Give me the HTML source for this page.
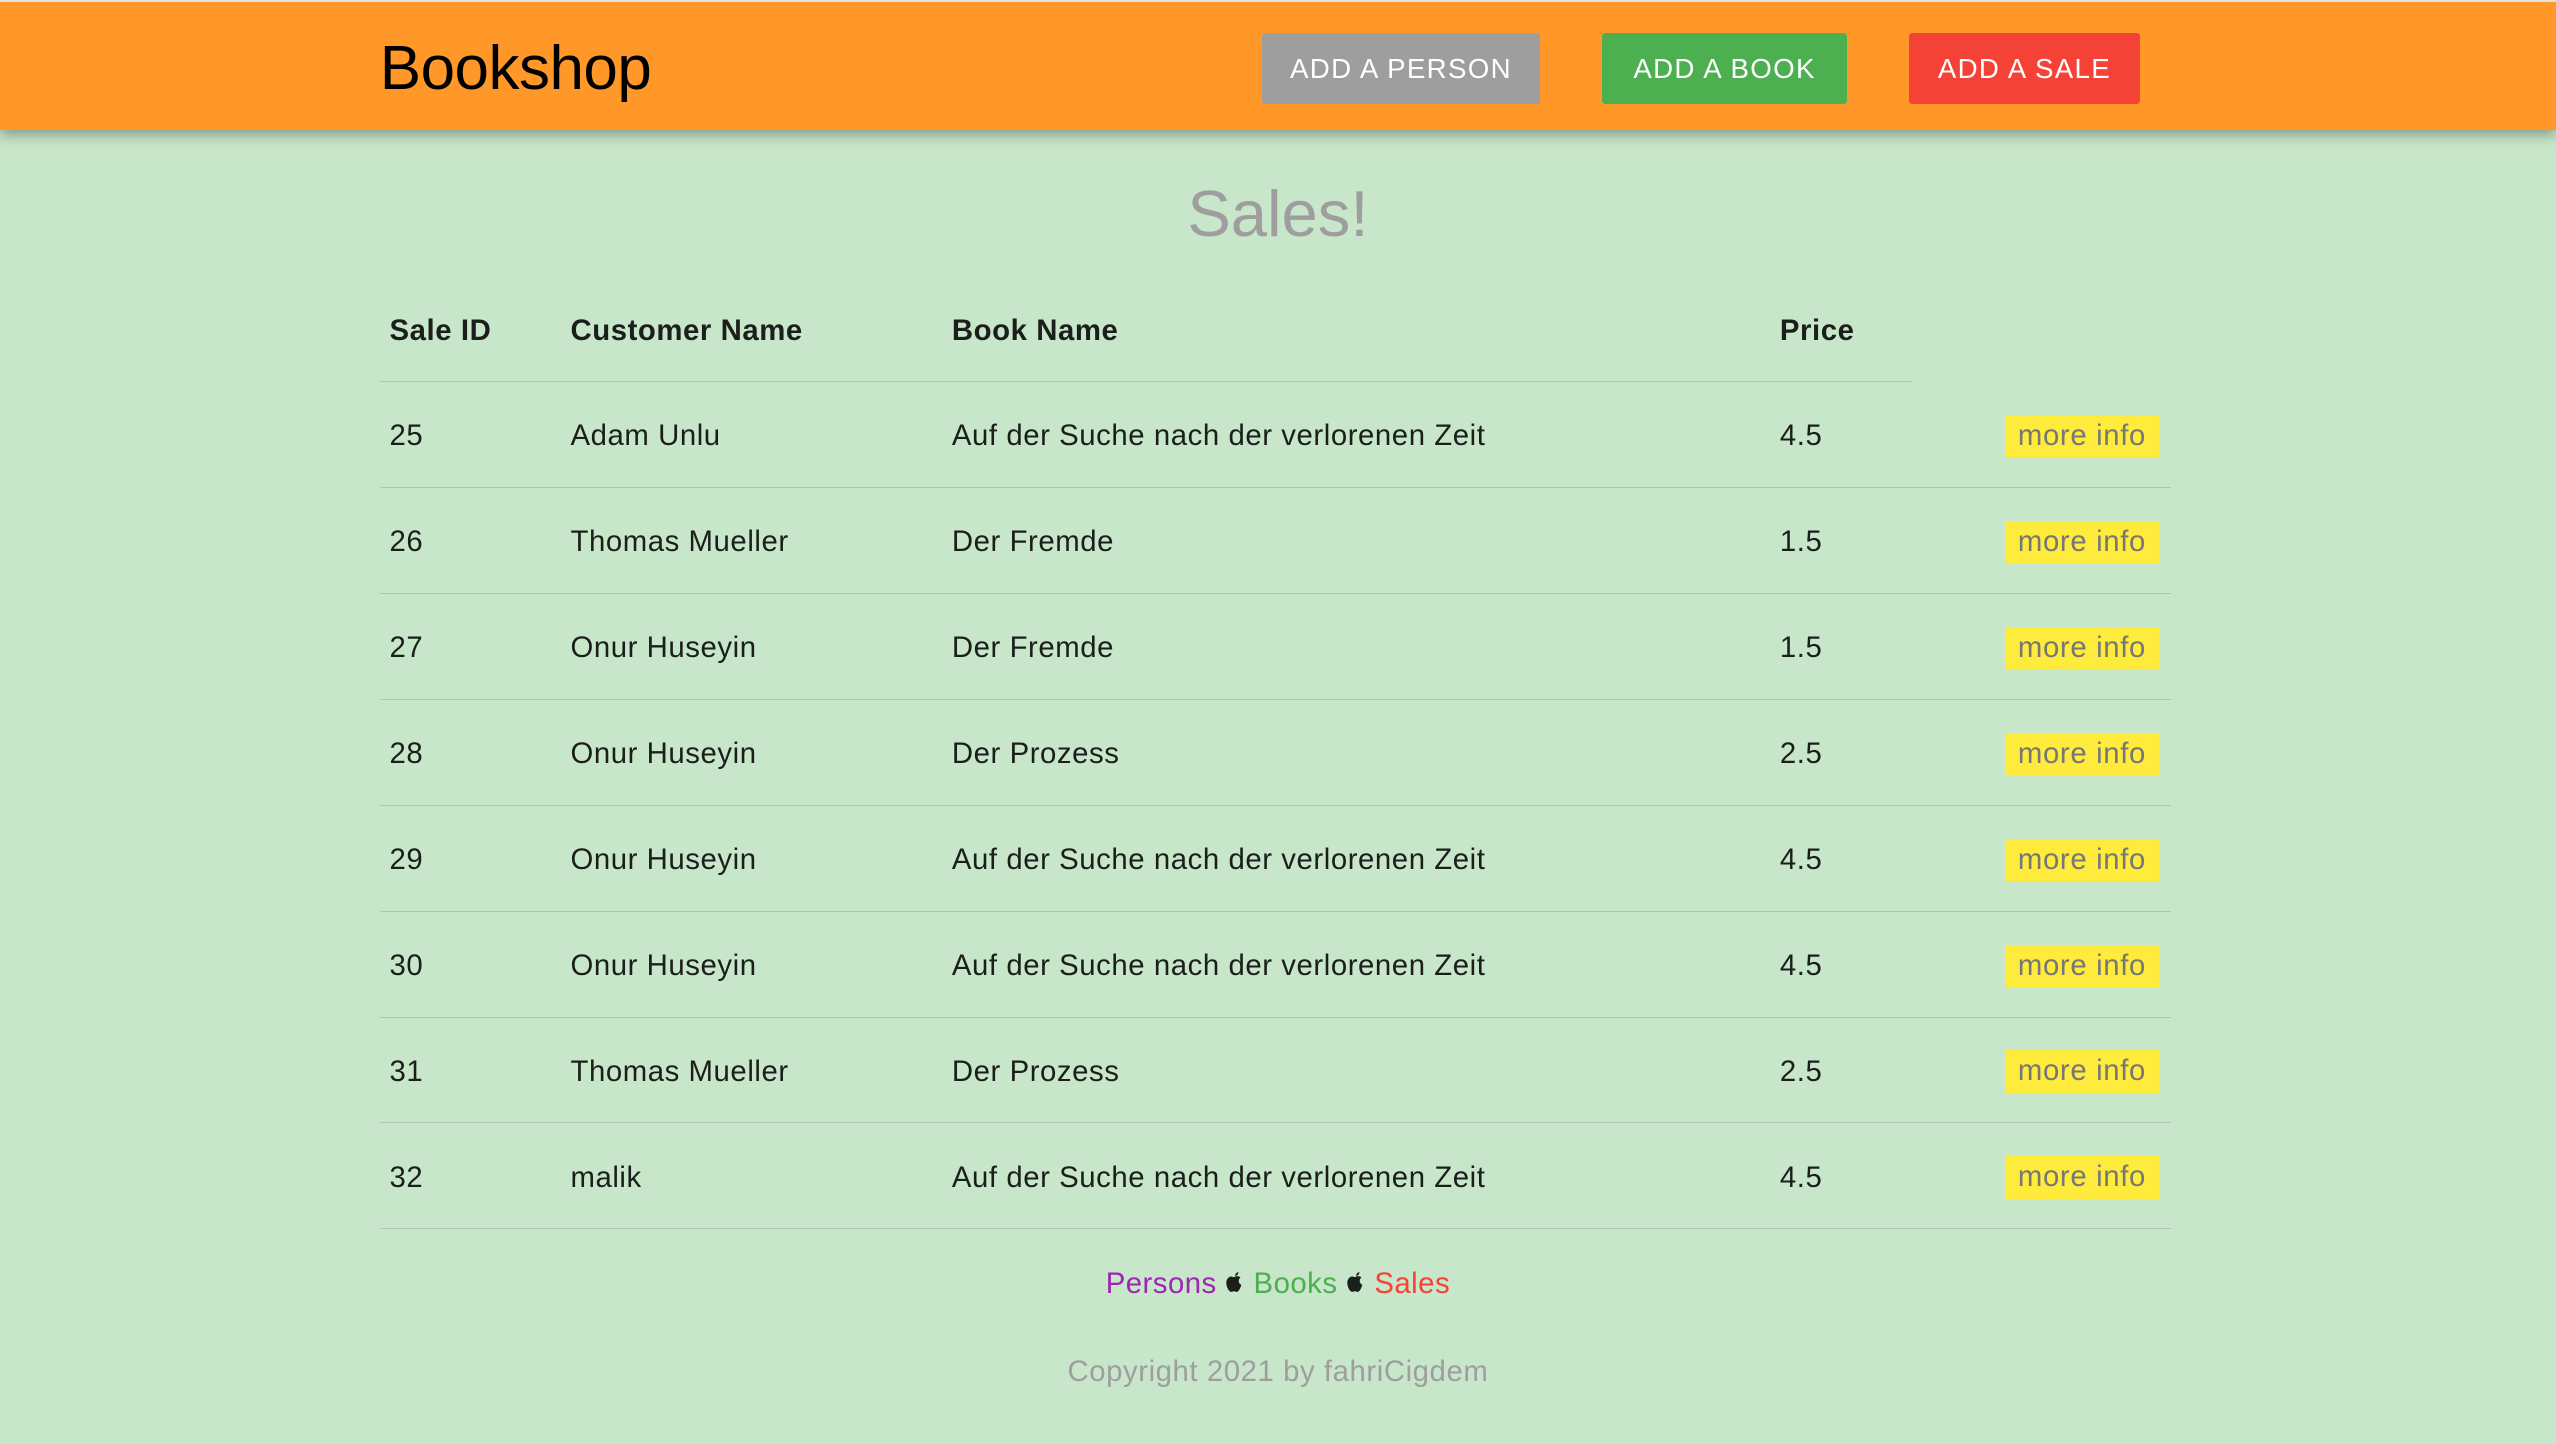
<!DOCTYPE html>
<html><head><meta charset="utf-8"><style>
html{zoom:1.63;}
*{margin:0;padding:0;box-sizing:border-box;}
body{width:1568px;height:886px;background:#C8E6C9;font-family:"Liberation Sans",sans-serif;position:relative;overflow:hidden;color:#1b1f1b;}
.top{position:absolute;left:0;top:0;width:1568px;height:1.3px;background:#e0e0e0;z-index:3;}
header{position:absolute;left:0;top:1px;width:1568px;height:79px;background:#FF9828;box-shadow:0 3px 8px rgba(0,0,0,0.35);z-index:2;}
.logo{position:absolute;left:233px;top:19px;font-size:38px;color:#000;letter-spacing:-0.3px;}
.btn{position:absolute;top:19px;height:44px;line-height:44px;color:#fff;font-size:17px;letter-spacing:0.8px;text-align:center;border-radius:2px;}
h1{position:absolute;left:0;width:1568px;text-align:center;top:108px;font-size:40px;font-weight:normal;color:#9E9E9E;}
table{position:absolute;left:233px;top:170px;border-collapse:collapse;table-layout:fixed;width:1099px;font-size:18px;letter-spacing:0.35px;}
th{text-align:left;font-weight:bold;height:64px;padding-left:6px;padding-top:2px;border-bottom:1px solid #aec7ae;vertical-align:middle;}
th.e{border-bottom:none;}
td{height:65px;padding-left:6px;padding-top:2px;border-bottom:1px solid #aec7ae;vertical-align:middle;}
.mi{display:inline-block;margin-left:51px;background:#FFEB3B;color:#777;padding:0 8px;height:26px;line-height:26px;font-size:18px;letter-spacing:0.4px;}
.links{position:absolute;left:0;width:1568px;text-align:center;top:777px;font-size:18px;letter-spacing:0.3px;}
.copy{position:absolute;left:0;width:1568px;text-align:center;top:831px;font-size:18px;color:#9E9E9E;letter-spacing:0.35px;}
</style></head><body>
<div class="top"></div>
<header>
<div class="logo">Bookshop</div>
<div class="btn" style="left:774px;width:171px;background:#9E9E9E;">ADD A PERSON</div>
<div class="btn" style="left:983px;width:150px;background:#4CAF50;">ADD A BOOK</div>
<div class="btn" style="left:1171px;width:142px;background:#F44336;">ADD A SALE</div>
</header>
<h1>Sales!</h1>
<table>
<colgroup><col style="width:111px"><col style="width:234px"><col style="width:508px"><col style="width:87px"><col style="width:159px"></colgroup>
<tr><th>Sale ID</th><th>Customer Name</th><th>Book Name</th><th>Price</th><th class="e"></th></tr>
<tr><td>25</td><td>Adam Unlu</td><td>Auf der Suche nach der verlorenen Zeit</td><td>4.5</td><td><span class="mi">more info</span></td></tr>
<tr><td>26</td><td>Thomas Mueller</td><td>Der Fremde</td><td>1.5</td><td><span class="mi">more info</span></td></tr>
<tr><td>27</td><td>Onur Huseyin</td><td>Der Fremde</td><td>1.5</td><td><span class="mi">more info</span></td></tr>
<tr><td>28</td><td>Onur Huseyin</td><td>Der Prozess</td><td>2.5</td><td><span class="mi">more info</span></td></tr>
<tr><td>29</td><td>Onur Huseyin</td><td>Auf der Suche nach der verlorenen Zeit</td><td>4.5</td><td><span class="mi">more info</span></td></tr>
<tr><td>30</td><td>Onur Huseyin</td><td>Auf der Suche nach der verlorenen Zeit</td><td>4.5</td><td><span class="mi">more info</span></td></tr>
<tr><td>31</td><td>Thomas Mueller</td><td>Der Prozess</td><td>2.5</td><td><span class="mi">more info</span></td></tr>
<tr><td>32</td><td>malik</td><td>Auf der Suche nach der verlorenen Zeit</td><td>4.5</td><td><span class="mi">more info</span></td></tr>
</table>
<div class="links"><span style="color:#9C27B0">Persons</span> <svg width="12" height="14" viewBox="0 0 12 14" style="vertical-align:-1px"><path d="M6 3.5C7 3 8.5 3 9.5 4 8 5 8 7.5 10 8.5 9.5 10.5 8.3 12.8 7.2 12.8 6.5 12.8 6.3 12.4 5.5 12.4 4.7 12.4 4.4 12.8 3.7 12.8 2.5 12.8 0.8 10 0.8 7.3 0.8 4.5 3 3 4.5 3.5 5 3.7 5.5 3.8 6 3.5Z M6.2 3C6.2 1.8 7.2 0.8 8.2 0.7 8.3 2 7.3 3 6.2 3Z" fill="#1b1f1b"/></svg> <span style="color:#4CAF50">Books</span> <svg width="12" height="14" viewBox="0 0 12 14" style="vertical-align:-1px"><path d="M6 3.5C7 3 8.5 3 9.5 4 8 5 8 7.5 10 8.5 9.5 10.5 8.3 12.8 7.2 12.8 6.5 12.8 6.3 12.4 5.5 12.4 4.7 12.4 4.4 12.8 3.7 12.8 2.5 12.8 0.8 10 0.8 7.3 0.8 4.5 3 3 4.5 3.5 5 3.7 5.5 3.8 6 3.5Z M6.2 3C6.2 1.8 7.2 0.8 8.2 0.7 8.3 2 7.3 3 6.2 3Z" fill="#1b1f1b"/></svg> <span style="color:#F44336">Sales</span></div>
<div class="copy">Copyright 2021 by fahriCigdem</div>
</body></html>
